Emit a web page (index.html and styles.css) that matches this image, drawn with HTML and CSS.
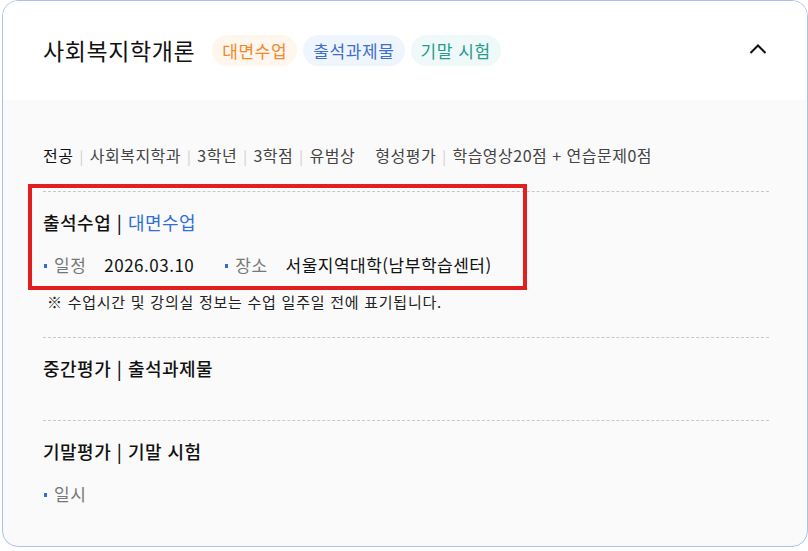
FILE: index.html
```html
<!DOCTYPE html>
<html lang="ko">
<head>
  <meta charset="UTF-8">
  <meta name="viewport" content="width=device-width, initial-scale=1.0">
  <title>사회복지학개론</title>
  <link rel="stylesheet" href="styles.css">
</head>
<body>
  <div class="card">
    <div class="card-head">
      <h2 class="course-title">사회복지학개론</h2>
      <span class="tag tag-orange">대면수업</span>
      <span class="tag tag-blue">출석과제물</span>
      <span class="tag tag-teal">기말 시험</span>
      <button class="toggle" aria-label="접기">
        <svg width="18" height="12" viewBox="0 0 18 12"><path d="M1.5 10 L9 2.5 L16.5 10" fill="none" stroke="#111" stroke-width="2"/></svg>
      </button>
    </div>

    <div class="card-body">
      <div class="info">
        <strong>전공</strong><span class="sep">|</span>사회복지학과<span class="sep">|</span>3학년<span class="sep">|</span>3학점<span class="sep">|</span>유범상<span class="gap"></span>형성평가<span class="sep">|</span>학습영상20점 + 연습문제0점
      </div>

      <div class="section">
        <h3 class="sec-title">출석수업 | <span class="hl">대면수업</span></h3>
        <div class="meta">
          <span class="label">일정</span><span class="value">2026.03.10</span>
          <span class="label">장소</span><span class="value">서울지역대학(남부학습센터)</span>
        </div>
        <p class="note">※ 수업시간 및 강의실 정보는 수업 일주일 전에 표기됩니다.</p>
        <div class="mark"></div>
      </div>

      <div class="section empty">
        <h3 class="sec-title">중간평가 | 출석과제물</h3>
      </div>

      <div class="section last">
        <h3 class="sec-title">기말평가 | 기말 시험</h3>
        <div class="meta">
          <span class="label">일시</span>
        </div>
      </div>
    </div>
  </div>
</body>
</html>
```

FILE: styles.css
```css
* { box-sizing: border-box; }
body {
  margin: 0;
  width: 808px;
  font-family: 'Noto Sans CJK KR', 'Noto Sans', sans-serif;
  color: #111;
  background: #fff;
}

.card {
  margin: 0 0 0 2px;
  border: 1px solid #a9c3e8;
  border-radius: 16px;
  overflow: hidden;
  height: 547px;
  background: #fafafa;
}

.card-head {
  display: flex;
  align-items: center;
  height: 99px;
  padding: 0 38px 0 40px;
  background: #fff;
}

.course-title {
  margin: 0 17px 2px 0;
  font-size: 23px;
  font-weight: 400;
  letter-spacing: 0.6px;
}

.tag {
  display: inline-block;
  margin-right: 6px;
  padding: 0 10px;
  height: 31px;
  line-height: 31px;
  border-radius: 16px;
  font-size: 17px;
  letter-spacing: 0.6px;
}
.tag-orange { color: #f08a2c; background: #fff6ee; }
.tag-blue { color: #3d6fce; background: #eff5fc; }
.tag-teal { color: #269c8c; background: #eff9f9; }

.toggle {
  margin-left: auto;
  padding: 0;
  border: 0;
  background: none;
  width: 18px;
  height: 12px;
  margin-right: 2px;
  margin-bottom: 4px;
}
.toggle svg { display: block; }

.card-body {
  padding: 43px 38px 0 40px;
}

.info {
  font-size: 16px;
  line-height: 24px;
  color: #444;
  letter-spacing: 0.5px;
}
.info strong { font-weight: 400; color: #111; }
.info .sep { color: #ccc; margin: 0 6px; font-size: 14px; }
.info .gap { display: inline-block; width: 20px; }

.section {
  position: relative;
  margin-top: 23px;
  padding: 18px 0 0;
  border-top: 1px dashed #c8c8c8;
}
.section.empty { padding-bottom: 17px; }
.section + .section { margin-top: 23px; }

.sec-title {
  margin: 0;
  font-size: 18px;
  line-height: 24px;
  font-weight: 500;
  letter-spacing: 0.5px;
}
.hl { color: #2f6fd6; font-weight: 400; }

.meta {
  margin-top: 19px;
  font-size: 17px;
  line-height: 24px;
  display: flex;
  align-items: center;
  letter-spacing: 0.5px;
}
.label {
  position: relative;
  padding-left: 11px;
  color: #777;
  margin-right: 18px;
}
.label::before {
  content: '';
  position: absolute;
  left: 1px;
  top: 11px;
  width: 3px;
  height: 4px;
  background: #2f6fd6;
}
.value { margin-right: 30px; }

.note {
  margin: 13px 0 0 4px;
  font-size: 15px;
  line-height: 24px;
  color: #222;
  letter-spacing: 0.75px;
}

.mark {
  position: absolute;
  left: -15px;
  top: -8px;
  width: 499px;
  height: 106px;
  border: 4px solid #e21f1f;
}
```
